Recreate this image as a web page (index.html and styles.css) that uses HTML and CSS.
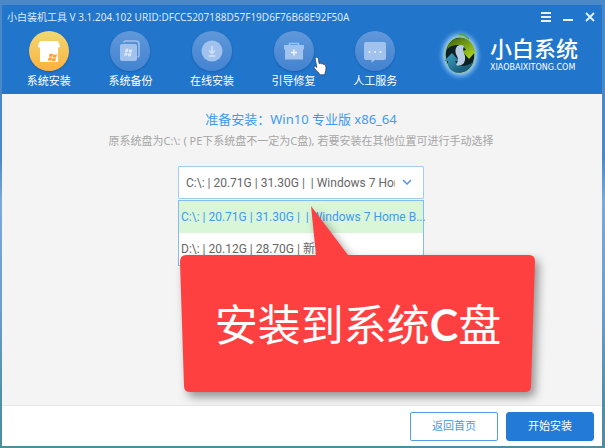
FILE: index.html
```
<!doctype html>
<html lang="zh-CN">
  <head>
    <meta charset="UTF-8" />
    <meta name="viewport" content="width=device-width, initial-scale=1.0" />
    <title>小白装机工具</title>
    <link rel="stylesheet" href="styles.css">
  </head>
  <body>
    <div class="window">
      <header class="header">
        <div class="titlebar">
          <span class="title">小白装机工具 V 3.1.204.102 URID:DFCC5207188D57F19D6F76B68E92F50A</span>
          <div class="controls">
            <button class="control" aria-label="菜单">
              <svg width="10" height="10" viewBox="0 0 10 10" fill="none" stroke="currentColor" stroke-width="2"><path d="M0 1h10M0 5h10M0 9h10" /></svg>
            </button>
            <button class="control" aria-label="最小化">
              <svg width="10" height="10" viewBox="0 0 10 10" fill="none" stroke="currentColor" stroke-width="2"><path d="M0 8h10" /></svg>
            </button>
            <button class="control" aria-label="关闭">
              <svg width="10" height="10" viewBox="0 0 10 10" fill="none" stroke="currentColor" stroke-width="1.800"><path d="M1 1l8 8M9 1L1 9" /></svg>
            </button>
          </div>
        </div>
        <div class="toolbar">
          <nav class="nav">
            <a class="nav-item active" href="#install">
              <span class="nav-icon">
                <svg width="40" height="40" viewBox="0 0 40 40">
                  <path d="M12 10h16q1 0 1.500 1l1.500 4q0 1.500-1.500 1.500h-19Q9 16.500 9 15l1.500-4q.5-1 1.500-1z" fill="#fff" />
                  <path d="M11 16h18v14q0 1-1 1H12q-1 0-1-1z" fill="#fff" />
                  <path d="M20.500 23q2-1 3.500 0l-.7 3q-1.500-.8-3.500 0zM24.500 23.300q1.500.8 3.500 0l-.7 3q-2 .8-3.500 0zM19.600 26.800q2-1 3.500 0l-.7 3q-1.500-.8-3.500 0zM23.600 27.100q1.500.8 3.500 0l-.7 3q-2 .8-3.500 0z" fill="#ff9f2e" />
                </svg>
              </span>
              系统安装
            </a>
            <a class="nav-item" href="#backup">
              <span class="nav-icon">
                <svg width="40" height="40" viewBox="0 0 40 40">
                  <path d="M14 11.500q0-1.500 1.500-1.500H26q3 0 3 3v11.500q0 1.500-1.500 1.500" fill="none" stroke="#a0c2ec" stroke-width="1.500" />
                  <rect x="10" y="13" width="17" height="17" rx="2" fill="#a0c2ec" />
                  <path d="M15.500 18q1.700-.8 3 0l-.6 3q-1.500-.7-3 0zM19.300 18.300q1.500.7 3 0l-.6 3q-1.700.7-3 0zM14.700 21.800q1.700-.8 3 0l-.6 3q-1.500-.7-3 0zM18.500 22.100q1.500.7 3 0l-.6 3q-1.700.7-3 0z" fill="#dbe8f8" />
                </svg>
              </span>
              系统备份
            </a>
            <a class="nav-item" href="#online">
              <span class="nav-icon">
                <svg width="40" height="40" viewBox="0 0 40 40">
                  <circle cx="20" cy="20" r="10.500" fill="#a0c2ec" />
                  <path d="M20 15v7M17 19.500l3 3 3-3M16.500 25h7" fill="none" stroke="#d3e3f7" stroke-width="1.500" />
                </svg>
              </span>
              在线安装
            </a>
            <a class="nav-item" href="#repair">
              <span class="nav-icon">
                <svg width="40" height="40" viewBox="0 0 40 40">
                  <path d="M15.500 14v-1.500h9V14" fill="none" stroke="#a0c2ec" stroke-width="1.500" />
                  <path d="M10 14h20v4l-1 1v9.500H11V19l-1-1z" fill="#a0c2ec" />
                  <path d="M20 18.500v6M17 21.500h6" stroke="#edf4fc" stroke-width="1.500" />
                </svg>
              </span>
              引导修复
            </a>
            <a class="nav-item" href="#service">
              <span class="nav-icon">
                <svg width="40" height="40" viewBox="0 0 40 40">
                  <path d="M12 11h17q2 0 2 2v14q0 2-2 2h-9l-3.500 3v-3H11q-2 0-2-2V13q0-2 2-2z" fill="#a0c2ec" />
                  <g fill="#edf4fc"><circle cx="14.500" cy="21" r="1" /><circle cx="20" cy="21" r="1" /><circle cx="25.500" cy="21" r="1" /></g>
                </svg>
              </span>
              人工服务
            </a>
          </nav>
          <svg class="cursor" width="14" height="20" viewBox="0 0 14 20">
            <path d="M3.600 1.200c1 0 1.500.7 1.700 1.500l.9 5c1-.8 2-.5 2.400.3.800-.5 1.700-.2 2 .5 1-.3 1.800.2 2 1.200.5 2 .7 3.800-.3 6.300l-.5 2.800H6.400L5.900 17C4 15.600 2.300 13.700 1 11.600c-.4-1 .8-1.800 1.600-1.200l1.200 1L2.200 3c-.2-1 .4-1.800 1.400-1.800z" fill="#fff" stroke="#26456d" stroke-width=".8" />
          </svg>
          <div class="brand">
            <svg width="48" height="54" viewBox="0 0 48 54">
              <defs>
                <radialGradient id="glow">
                  <stop offset=".65" stop-color="#a5d5f4" />
                  <stop offset=".8" stop-color="#67abeb" stop-opacity=".6" />
                  <stop offset="1" stop-color="#2276cb" stop-opacity="0" />
                </radialGradient>
                <linearGradient id="leaf" x2="1" y2="1">
                  <stop offset="0" stop-color="#395e13" />
                  <stop offset="1" stop-color="#b9e51b" />
                </linearGradient>
                <linearGradient id="water" x2="1" y2="1">
                  <stop offset="0" stop-color="#42a5c8" />
                  <stop offset="1" stop-color="#0b4561" />
                </linearGradient>
              </defs>
              <ellipse cx="23" cy="27" rx="23" ry="27" fill="url(#glow)" />
              <ellipse cx="23" cy="27" rx="15" ry="18" fill="#0c2025" stroke="#8fbba8" stroke-width="1.500" />
              <path d="M10 21C13 8 30 6 36 18l1 5 3-1-8 9-7-8 4-1c-4-7-13-6-19-1z" fill="url(#leaf)" />
              <path d="M36 34c-3 10-15 14-22 8-3-3-3-5-3-9H7l8-8 7 8h-4c4 7 11 6 18 1z" fill="url(#water)" />
              <path d="M27 18c-6-3-10 2-8 8 2 4 3 6 0 11 6 2 10-2 9-9-1-4-3-5-1-10z" fill="#b7cde4" />
              <path d="M22 6l5 1 5 4" fill="none" stroke="#4fa635" stroke-width="1.500" />
            </svg>
            <div class="brand-text">
              <span class="brand-name">小白系统</span>
              <span class="brand-url">XIAOBAIXITONG.COM</span>
            </div>
          </div>
        </div>
      </header>

      <main class="content">
        <h1 class="heading">准备安装：Win10 专业版 x86_64</h1>
        <p class="hint"><label for="disk">原系统盘为C:\: ( PE下系统盘不一定为C盘), 若要安装在其他位置可进行手动选择</label></p>
        <div class="picker">
          <select class="disk-select" id="disk">
            <option>C:\: | 20.71G | 31.30G | &nbsp;| Windows 7 Home B...</option>
            <option>D:\: | 20.12G | 28.70G | 新加卷</option>
          </select>
          <svg class="chevron" width="10" height="6" viewBox="0 0 10 6" fill="none" stroke="#5794dc" stroke-width="1.500"><path d="M1 1l4 4 4-4" /></svg>
          <ul class="disk-list" role="listbox" aria-label="系统盘">
            <li class="disk selected" role="option" aria-selected="true">C:\: | 20.71G | 31.30G | &nbsp;| Windows 7 Home B...</li>
            <li class="disk" role="option" aria-selected="false">D:\: | 20.12G | 28.70G | 新加卷</li>
          </ul>
          <div class="callout">
            <svg class="callout-shape" width="356" height="186" viewBox="0 0 356 186">
              <path d="M131 0l37 49h181q6 0 6 6l-4 125q0 6-6 6H10q-6 0-6-6L0 56q0-7 6-7h130z" fill="#ff4040" />
            </svg>
            <p class="callout-text">安装到系统<b>C</b>盘</p>
          </div>
        </div>
      </main>

      <footer class="footer">
        <button class="btn">返回首页</button>
        <button class="btn primary">开始安装</button>
      </footer>
    </div>
  </body>
</html>
```
FILE: styles.css
```
* {
  box-sizing: border-box;
}

body {
  margin: 0;
  padding: 5px 3px 2px 2px;
  min-height: 100vh;
  display: flex;
  font-family: "Noto Sans", "Noto Sans CJK SC", sans-serif;
  font-size: 11px;
  line-height: 16px;
  background: linear-gradient(#4b88c8 0%, #4b88c8 35%, #7ba9d8 45%, #6b9ccc 70%, #4f8fa5 90%, #4f8c9e 100%);
}

button,
select {
  font: inherit;
}

.window {
  flex: 1;
  min-width: 0;
  display: flex;
  flex-direction: column;
  background: #f4f4f4;
}

.header {
  color: #fff;
  background: #2175ca;
  height: 89px;
}

.titlebar {
  display: flex;
  justify-content: space-between;
  align-items: center;
  height: 24px;
  padding: 0 7px 0 5px;
}

.title {
  font-size: 10px;
  color: #dceafa;
  white-space: nowrap;
}

.controls {
  display: flex;
  gap: 12px;
}

.control {
  display: flex;
  padding: 0;
  border: none;
  background: none;
  color: #e8f2ff;
  cursor: pointer;
}

.toolbar {
  position: relative;
  display: flex;
  justify-content: space-between;
  padding: 0 24px 0 6px;
}

.nav {
  display: flex;
  width: 408px;
}

.nav-item {
  flex: 1;
  display: flex;
  flex-direction: column;
  align-items: center;
  gap: 2px;
  padding-top: 2px;
  color: #fff;
  text-decoration: none;
}

.nav-icon {
  width: 40px;
  height: 40px;
  border-radius: 50%;
  background: linear-gradient(#6098da, #4383d0);
  box-shadow: 0 1px 2px rgba(0, 50, 120, 0.3);
}

.active .nav-icon {
  background: linear-gradient(#eed973, #ffb03e);
}

.cursor {
  position: absolute;
  left: 311px;
  top: 27px;
}

.brand {
  display: flex;
  align-items: center;
  gap: 5px;
  height: 52px;
}

.brand-text {
  display: flex;
  flex-direction: column;
}

.brand-name {
  font-size: 22px;
  line-height: 26px;
  font-weight: 500;
}

.brand-url {
  font-family: "DejaVu Sans", sans-serif;
  font-size: 8px;
  line-height: 14px;
}

.content {
  flex: 1;
  display: flex;
  flex-direction: column;
  align-items: center;
  padding: 15px 2px 0 0;
}

.heading {
  margin: 0;
  font-size: 13px;
  line-height: 20px;
  font-weight: 400;
  color: #409bef;
}

.hint {
  margin: 4px 0 17px;
  color: #a6a6a6;
}

.picker {
  position: relative;
  width: 246px;
}

.disk-select,
.disk-list {
  font-family: Roboto, "Noto Sans CJK SC", sans-serif;
  font-size: 12px;
  color: #666;
}

.disk-select {
  display: block;
  width: 100%;
  height: 33px;
  padding: 0 28px 0 7px;
  appearance: none;
  border: 1px solid #a2cdf8;
  border-radius: 1px;
  background: #fff;
}

.chevron {
  position: absolute;
  right: 12px;
  top: 13px;
}

.disk-list {
  position: absolute;
  top: 34px;
  left: 0;
  right: 0;
  margin: 0;
  padding: 0;
  list-style: none;
  border: 1px solid #83bdeb;
  background: #fff;
}

.disk {
  padding-left: 2px;
  line-height: 32px;
  white-space: nowrap;
}

.disk.selected {
  color: #409bef;
  background: #daf6d8;
}

.callout {
  position: absolute;
  top: 40px;
  left: 2px;
}

.callout-shape {
  display: block;
  overflow: visible;
  filter: drop-shadow(4px 5px 5px rgba(0, 0, 0, 0.4));
}

.callout-text {
  position: absolute;
  inset: 51px 0 0;
  display: flex;
  align-items: center;
  justify-content: center;
  margin: 0;
  color: #fff;
  font-size: 43px;
  white-space: nowrap;
}

.callout-text b {
  font-family: Lato, sans-serif;
}

.footer {
  display: flex;
  justify-content: flex-end;
  align-items: center;
  gap: 8px;
  height: 41px;
  padding: 0 8px;
  border-top: 1px solid #e6e6e6;
  background: #fff;
}

.btn {
  width: 88px;
  height: 29px;
  padding: 0;
  border: 1px solid #559de5;
  border-radius: 2px;
  background: #fff;
  color: #409bef;
  cursor: pointer;
}

.btn.primary {
  border-color: #247bd7;
  border-radius: 3px;
  background: #247bd7;
  color: #fff;
}
```
